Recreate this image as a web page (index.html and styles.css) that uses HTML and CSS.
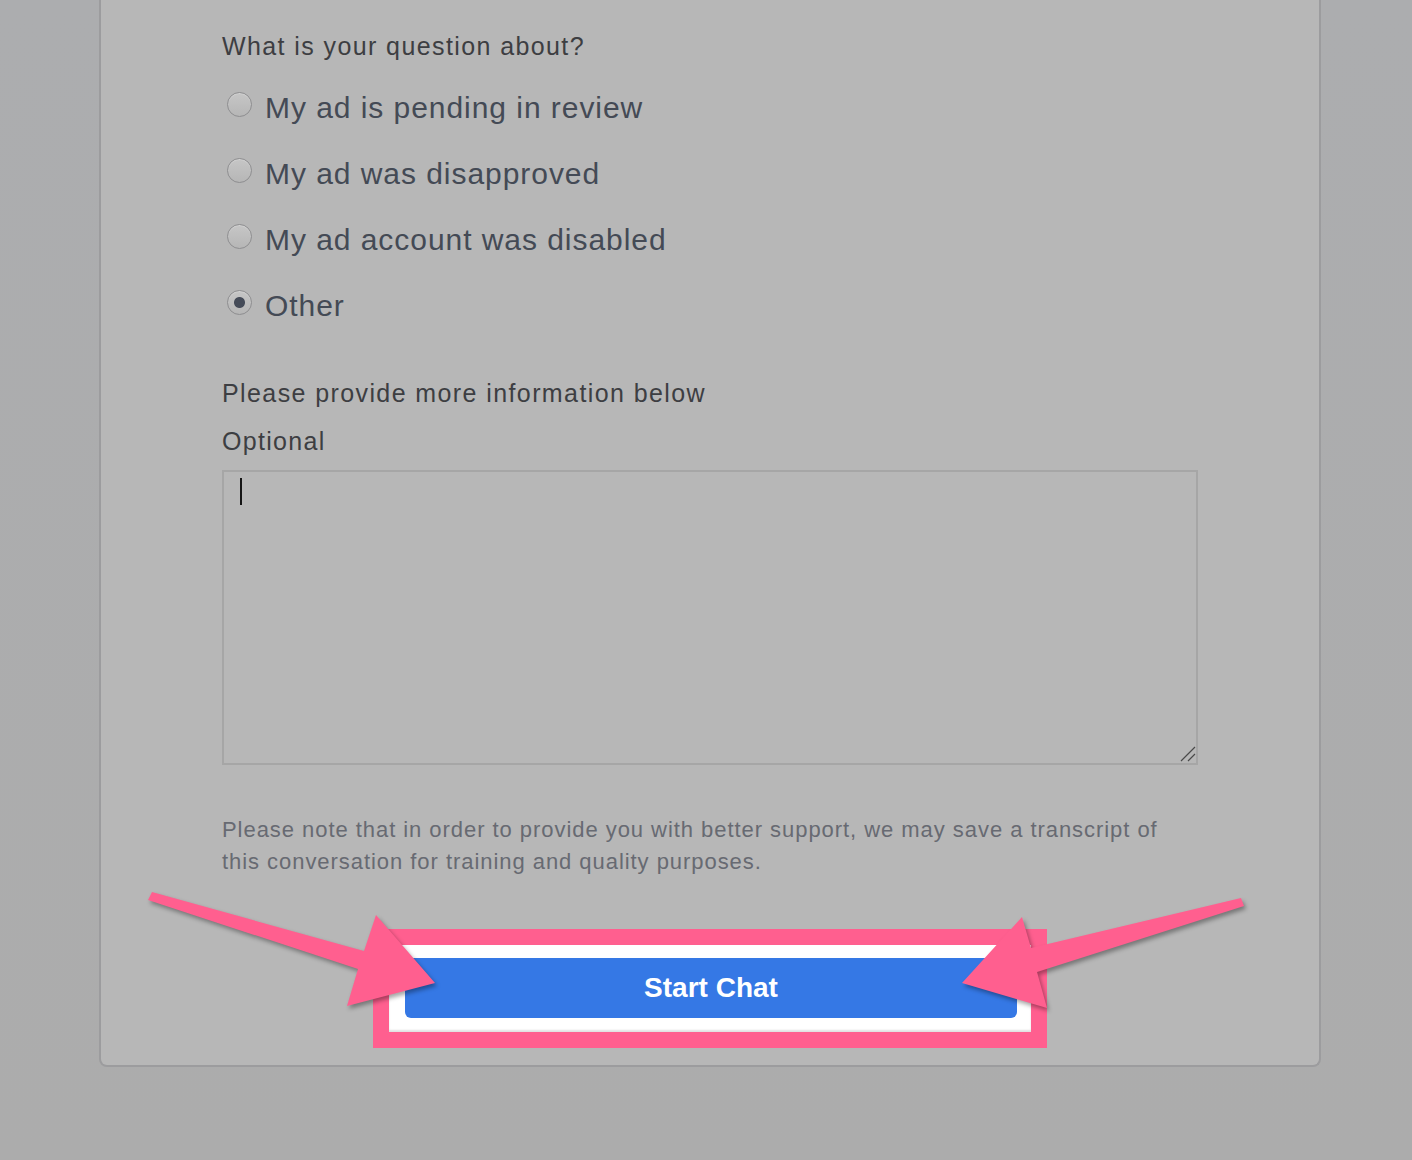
FILE: index.html
```html
<!DOCTYPE html>
<html lang="en">
<head>
<meta charset="utf-8">
<title>Start Chat</title>
<link rel="stylesheet" href="styles.css">
</head>
<body>
<div class="card">
  <div class="question">What is your question about?</div>
  <div class="options">
    <label class="option"><input type="radio" name="topic" class="radio"><span class="opt-text">My ad is pending in review</span></label>
    <label class="option"><input type="radio" name="topic" class="radio"><span class="opt-text">My ad was disapproved</span></label>
    <label class="option"><input type="radio" name="topic" class="radio"><span class="opt-text">My ad account was disabled</span></label>
    <label class="option"><input type="radio" name="topic" class="radio" checked><span class="opt-text">Other</span></label>
  </div>
  <div class="more">Please provide more information below</div>
  <div class="optional">Optional</div>
  <div class="textarea">
    <div class="caret"></div>
    <svg class="grip" width="16" height="16" viewBox="0 0 16 16"><path d="M1 15 L15 1 M8 15 L15 8" stroke="#4a4a4a" stroke-width="1.2" fill="none"/></svg>
  </div>
  <p class="note">Please note that in order to provide you with better support, we may save a transcript of this conversation for training and quality purposes.</p>
  <div class="actions">
    <div class="highlight">
      <div class="highlight-inner">
        <button class="start">Start Chat</button>
      </div>
    </div>
  </div>
</div>
<svg class="arrows" width="1412" height="1160" viewBox="0 0 1412 1160">
  <polygon points="152,892 364,951 376,915 435,983 347,1006 358,969 148,900" />
  <polygon points="1241,898 1031,948 1022,917 962,983 1047,1008 1037,972 1244,906" />
</svg>
</body>
</html>
```
FILE: styles.css
```css
html, body {
  margin: 0;
  padding: 0;
}
body {
  background: linear-gradient(#acadaf, #acacac);
  min-height: 1160px;
  font-family: "Liberation Sans", Arial, Helvetica, sans-serif;
  position: relative;
  overflow: hidden;
}
.card {
  margin-left: 99px;
  width: 1222px;
  box-sizing: border-box;
  background: #b7b7b7;
  border: 2px solid #9c9c9e;
  border-top: none;
  border-radius: 0 0 8px 8px;
  padding: 30px 121px 17px 121px;
}
.question {
  font-size: 25px;
  line-height: 32px;
  color: #3d3e42;
  letter-spacing: 1.4px;
}
.options {
  margin-top: 13px;
  display: flex;
  flex-direction: column;
}
.option {
  display: flex;
  align-items: center;
  height: 66px;
}
.radio {
  appearance: none;
  -webkit-appearance: none;
  margin: -8px 13px 0 5px;
  width: 25px;
  height: 25px;
  box-sizing: border-box;
  border: 1px solid #8e8e90;
  border-radius: 50%;
  background: linear-gradient(#c6c6c6, #b6b6b6);
  box-shadow: inset 0 1px 1px rgba(255,255,255,0.25);
  flex: none;
}
.radio:checked {
  background: radial-gradient(circle, #454b58 0, #454b58 5px, rgba(69,75,88,0) 6px), linear-gradient(#c6c6c6, #b6b6b6);
}
.opt-text {
  font-size: 30px;
  line-height: 66px;
  color: #444a55;
  letter-spacing: 0.95px;
}
.more {
  margin-top: 38px;
  font-size: 25px;
  line-height: 32px;
  color: #3d3e42;
  letter-spacing: 1.4px;
}
.optional {
  margin-top: 16px;
  font-size: 25px;
  line-height: 32px;
  color: #3d3e42;
  letter-spacing: 1.3px;
}
.textarea {
  margin-top: 13px;
  height: 295px;
  box-sizing: border-box;
  border: 2px solid #a6a6a6;
  position: relative;
}
.caret {
  margin: 6px 0 0 16px;
  width: 2px;
  height: 27px;
  background: #151515;
}
.grip {
  position: absolute;
  right: 0;
  bottom: 1px;
}
.note {
  margin: 49px 0 0 0;
  font-size: 22px;
  line-height: 32px;
  color: #676a72;
  letter-spacing: 0.95px;
}
.actions {
  margin-top: 51px;
  display: flex;
  justify-content: center;
}
.highlight {
  border: 16px solid #ff5f8f;
  background: #ffffff;
}
.highlight-inner {
  padding: 13px 14px 14px 16px;
  box-shadow: inset 0 -2px 2px rgba(0,0,0,0.12);
}
.start {
  display: block;
  width: 612px;
  height: 60px;
  border: none;
  border-radius: 6px;
  background: #3578e5;
  color: #ffffff;
  font-family: "Liberation Sans", Arial, Helvetica, sans-serif;
  font-size: 28px;
  font-weight: bold;
  padding: 0;
  margin: 0;
}
.arrows {
  position: absolute;
  left: 0;
  top: 0;
  pointer-events: none;
}
.arrows polygon {
  fill: #ff5f8f;
  filter: drop-shadow(2px 3px 2px rgba(0,0,0,0.35));
}
```
